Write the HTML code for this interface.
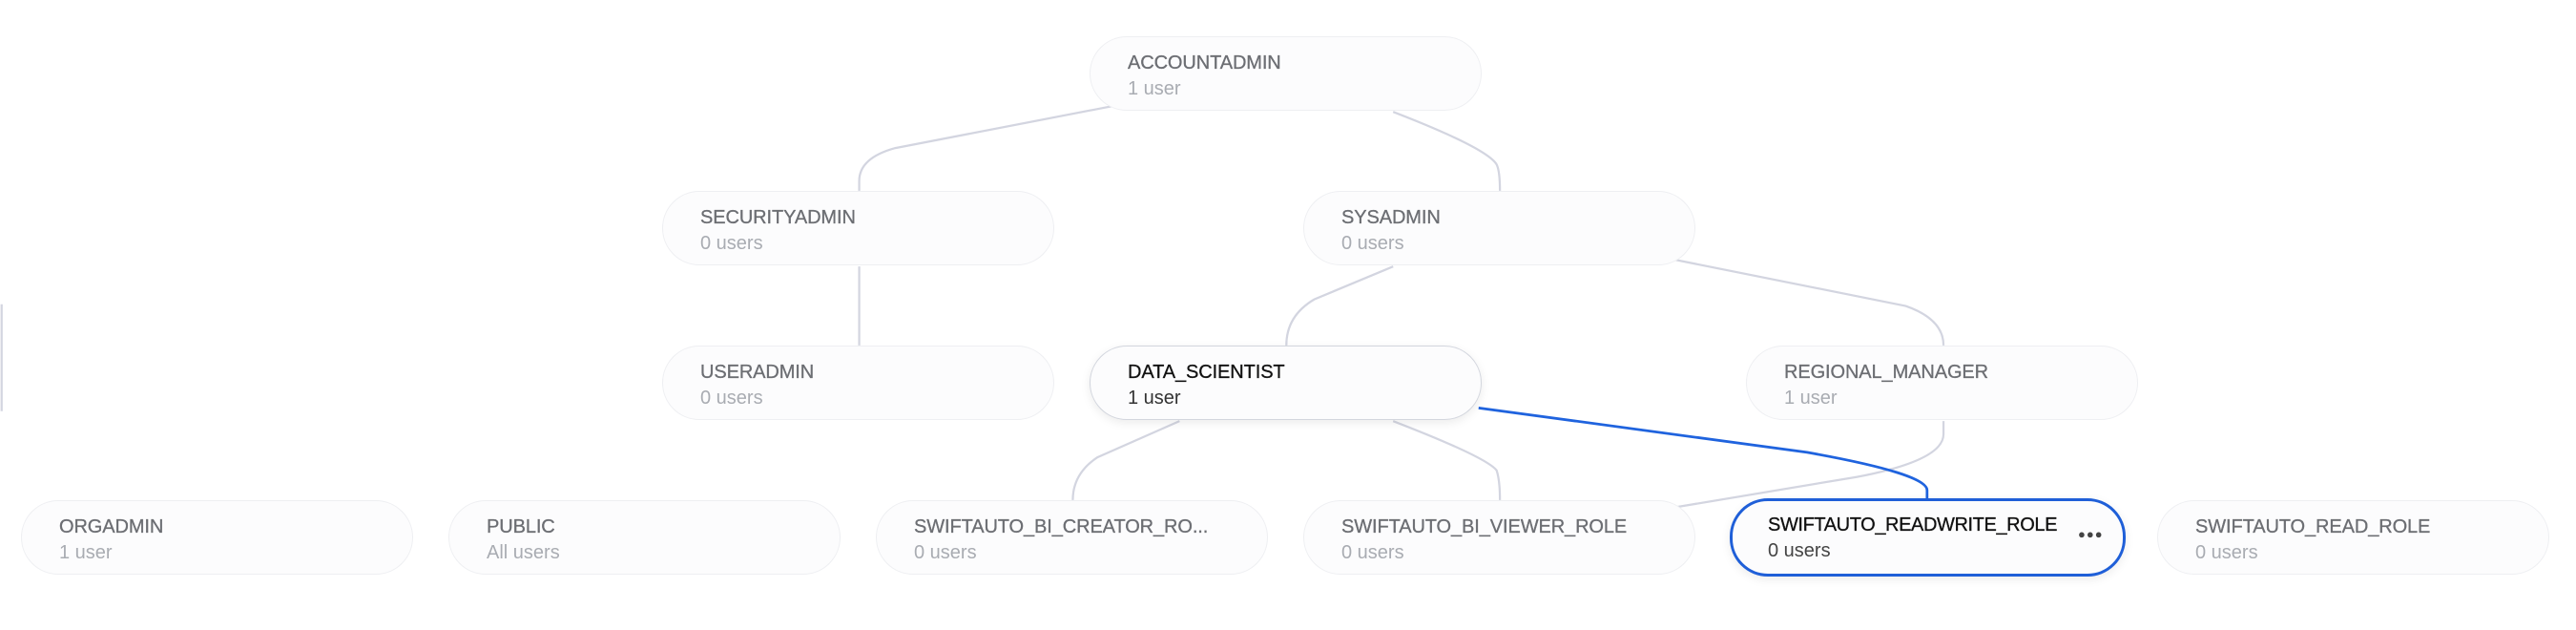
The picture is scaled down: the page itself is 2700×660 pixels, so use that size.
<!DOCTYPE html>
<html><head><meta charset="utf-8"><style>
body{margin:0;width:2700px;height:660px;background:#fff;position:relative;overflow:hidden;font-family:"Liberation Sans",sans-serif}
.n{position:absolute;width:411px;height:78px;border:1px solid #eeeff2;background:#fcfcfd;border-radius:40px;box-sizing:border-box}
.t{position:absolute;left:39px;top:16px;font-size:20px;color:#6c6e73;letter-spacing:-0.1px;-webkit-text-stroke:0.3px #6c6e73}
.s{position:absolute;left:39px;top:43px;font-size:20px;color:#a9acb2}
.d{border-color:#d3d6de;box-shadow:0 3px 10px rgba(0,0,0,0.08)}
.d .t{color:#111;-webkit-text-stroke:0.3px #111}.d .s{color:#333}
.b{border:3px solid #1f5fd8;box-shadow:0 3px 10px rgba(0,0,0,0.08)}
.b .t{left:37px;top:14px;color:#111;-webkit-text-stroke:0.3px #111;letter-spacing:-0.4px}.b .s{left:37px;top:41px;color:#444}
svg{position:absolute;left:0;top:0}
</style></head><body>
<svg width="2700" height="660" viewBox="0 0 1568 383" preserveAspectRatio="none" fill="none" stroke-width="1.3">
<g stroke="#d3d5e0">
<path d="M685 63 L545 90 Q523 96 523 110 L523 116"/>
<path d="M848 68 Q905 90 911 100 Q913 104 913 116"/>
<path d="M523 162 L523 210"/>
<path d="M848 162 L800 182 Q783 192 783 210"/>
<path d="M1010 156 L1160 186 Q1183 194 1183 210"/>
<path d="M718 256 L668 278 Q653 288 653 304"/>
<path d="M848 256 Q905 278 911 286 Q913 292 913 304"/>
<path d="M1183 256 L1183 264 Q1183 280 1130 290 L1010 310"/>
<path d="M1 185 L1 250"/>
</g>
<path d="M900 248 L1100 275 Q1173 288 1173 298 L1173 304" stroke="#1f63de" stroke-width="1.6"/>
</svg>
<div class="n" style="left:1142px;top:38px"><div class="t">ACCOUNTADMIN</div><div class="s">1 user</div></div>
<div class="n" style="left:694px;top:200px"><div class="t">SECURITYADMIN</div><div class="s">0 users</div></div>
<div class="n" style="left:1366px;top:200px"><div class="t">SYSADMIN</div><div class="s">0 users</div></div>
<div class="n" style="left:694px;top:362px"><div class="t">USERADMIN</div><div class="s">0 users</div></div>
<div class="n d" style="left:1142px;top:362px"><div class="t">DATA_SCIENTIST</div><div class="s">1 user</div></div>
<div class="n" style="left:1830px;top:362px"><div class="t">REGIONAL_MANAGER</div><div class="s">1 user</div></div>
<div class="n" style="left:22px;top:524px"><div class="t">ORGADMIN</div><div class="s">1 user</div></div>
<div class="n" style="left:470px;top:524px"><div class="t">PUBLIC</div><div class="s">All users</div></div>
<div class="n" style="left:918px;top:524px"><div class="t">SWIFTAUTO_BI_CREATOR_RO...</div><div class="s">0 users</div></div>
<div class="n" style="left:1366px;top:524px"><div class="t">SWIFTAUTO_BI_VIEWER_ROLE</div><div class="s">0 users</div></div>
<div class="n b" style="left:1813px;top:522px;width:415px;height:82px"><div class="t">SWIFTAUTO_READWRITE_ROLE</div><div class="s">0 users</div><div style="position:absolute;left:362px;top:27px;font-size:13px;color:#444;letter-spacing:1px">●●●</div></div>
<div class="n" style="left:2261px;top:524px"><div class="t">SWIFTAUTO_READ_ROLE</div><div class="s">0 users</div></div>
</body></html>
